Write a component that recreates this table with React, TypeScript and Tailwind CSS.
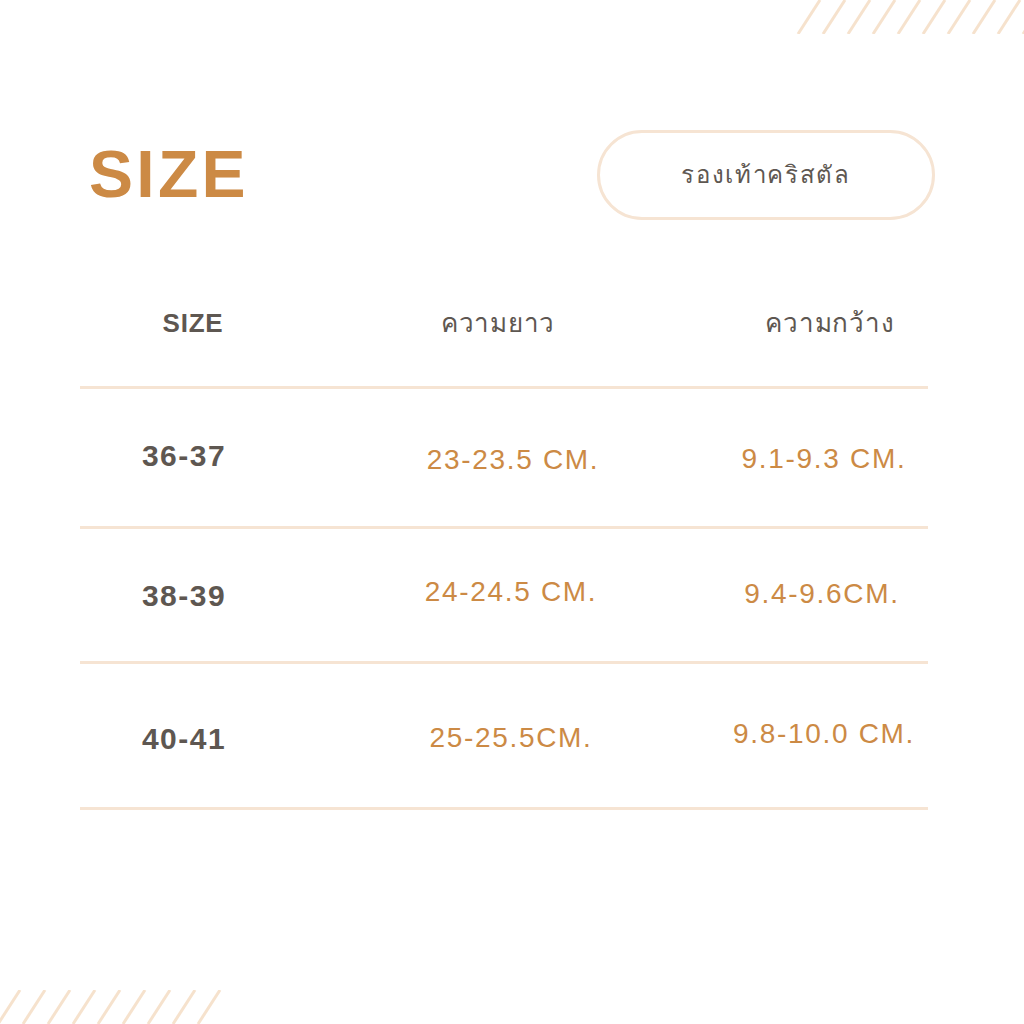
import React from "react";

const rows = [
  { size: "36-37", len: "23-23.5 CM.", wid: "9.1-9.3 CM.", h: "h-[137px]", sizePos: "pb-[4px]", lenPos: "pt-[4px] pl-[18px]", widPos: "pt-[2px] pl-[0px]" },
  { size: "38-39", len: "24-24.5 CM.", wid: "9.4-9.6CM.", h: "h-[132px]", sizePos: "", lenPos: "pb-[6px] pl-[14px]", widPos: "pb-[2px] pr-[4px]" },
  { size: "40-41", len: "25-25.5CM.", wid: "9.8-10.0 CM.", h: "h-[143px]", sizePos: "pt-[6px]", lenPos: "pt-[4px] pl-[14px]", widPos: "pb-[4px] pl-[0px]" },
];

const Stripes = ({ count }: { count: number }) => (
  <svg width={count * 25 + 30} height="34" viewBox={`0 0 ${count * 25 + 30} 34`}>
    {Array.from({ length: count }).map((_, i) => (
      <line key={i} x1={i * 25 + 2} y1="34" x2={i * 25 + 24} y2="0" stroke="#f6e2cd" strokeWidth="3" />
    ))}
  </svg>
);

export default function App() {
  return (
    <div className="relative w-[1024px] h-[1024px] overflow-hidden bg-white font-['Liberation_Sans','Noto_Sans',sans-serif]">
      {/* deco stripes */}
      <div className="absolute top-0 left-[796px]">
        <Stripes count={10} />
      </div>
      <div className="absolute bottom-0 left-[-4px]">
        <Stripes count={9} />
      </div>

      <div className="pt-[130px] px-[80px]">
        {/* title + pill */}
        <div className="flex items-center justify-between w-[848px] h-[90px]">
          <h1 className="ml-[9px] mt-[-2px] text-[66px] font-semibold tracking-[0.05em] text-[#cc8a45] leading-none">SIZE</h1>
          <div className="mr-[-7px] flex items-center justify-center w-[338px] h-[90px] rounded-full border-[3px] border-[#f6e4d3]">
            <span className="text-[24px] tracking-[0.07em] text-[#5e5751]">รองเท้าคริสตัล</span>
          </div>
        </div>

        {/* table */}
        <div className="mt-[70px] w-[848px]">
          <div className="grid grid-cols-[208px_432px_208px] h-[96px] pb-[43px] items-end text-[#5e5751]">
            <div className="text-center text-[26px] font-bold tracking-[0.03em] pl-[18px]">SIZE</div>
            <div className="text-center text-[26px] tracking-[0.03em] pr-[12px]">ความยาว</div>
            <div className="text-center text-[26px] tracking-[0.03em] pl-[12px]">ความกว้าง</div>
          </div>
          <div className="h-[3px] bg-[#f6e4d3]" />
          {rows.map((r) => (
            <div key={r.size}>
              <div className={`grid grid-cols-[208px_432px_208px] items-center ${r.h}`}>
                <div className={`text-center text-[30px] font-bold tracking-[0.05em] text-[#5e5751] ${r.sizePos}`}>{r.size}</div>
                <div className={`text-center text-[28px] tracking-[0.06em] text-[#cc8a45] ${r.lenPos}`}>{r.len}</div>
                <div className={`text-center text-[28px] tracking-[0.06em] text-[#cc8a45] ${r.widPos}`}>{r.wid}</div>
              </div>
              <div className="h-[3px] bg-[#f6e4d3]" />
            </div>
          ))}
        </div>
      </div>
    </div>
  );
}
